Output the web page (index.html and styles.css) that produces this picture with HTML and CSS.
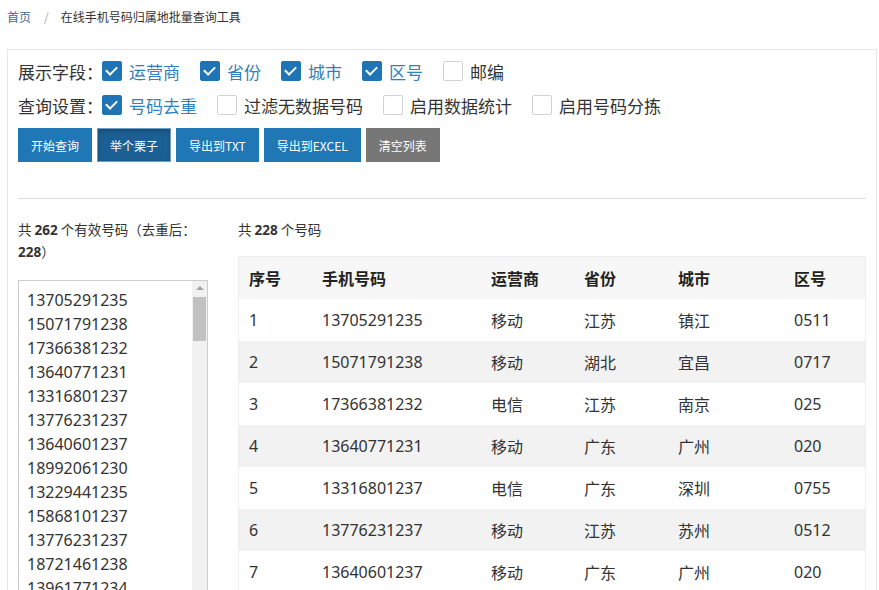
FILE: index.html
```html
<!DOCTYPE html>
<html lang="zh-CN">
<head>
<meta charset="utf-8">
<title>在线手机号码归属地批量查询工具</title>
<link rel="stylesheet" href="styles.css">
</head>
<body>
<div class="crumb"><a class="crumb-link">首页</a><span class="crumb-sep">/</span><span class="crumb-cur">在线手机号码归属地批量查询工具</span></div>
<div class="panel">
  <div class="form-row">
    <span class="form-label">展示字段：</span>
    <label class="opt on"><span class="cb"></span>运营商</label>
    <label class="opt on"><span class="cb"></span>省份</label>
    <label class="opt on"><span class="cb"></span>城市</label>
    <label class="opt on"><span class="cb"></span>区号</label>
    <label class="opt"><span class="cb"></span>邮编</label>
  </div>
  <div class="form-row">
    <span class="form-label">查询设置：</span>
    <label class="opt on"><span class="cb"></span>号码去重</label>
    <label class="opt"><span class="cb"></span>过滤无数据号码</label>
    <label class="opt"><span class="cb"></span>启用数据统计</label>
    <label class="opt"><span class="cb"></span>启用号码分拣</label>
  </div>
  <div class="btns">
    <button class="btn">开始查询</button>
    <button class="btn active">举个栗子</button>
    <button class="btn">导出到TXT</button>
    <button class="btn">导出到EXCEL</button>
    <button class="btn gray">清空列表</button>
  </div>
  <div class="divider"></div>
  <div class="cols">
    <div class="left">
      <p class="info">共 <b>262</b> 个有效号码（去重后：<b>228</b>）</p>
      <div class="listbox">
        <div class="list">
          <div>13705291235</div>
          <div>15071791238</div>
          <div>17366381232</div>
          <div>13640771231</div>
          <div>13316801237</div>
          <div>13776231237</div>
          <div>13640601237</div>
          <div>18992061230</div>
          <div>13229441235</div>
          <div>15868101237</div>
          <div>13776231237</div>
          <div>18721461238</div>
          <div>13961771234</div>
        </div>
        <div class="sbar"><div class="sarrow"></div><div class="sthumb"></div></div>
      </div>
    </div>
    <div class="right">
      <p class="info">共 <b>228</b> 个号码</p>
      <table class="tbl">
        <thead>
          <tr><th class="c1">序号</th><th class="c2">手机号码</th><th class="c3">运营商</th><th class="c4">省份</th><th class="c5">城市</th><th>区号</th></tr>
        </thead>
        <tbody>
          <tr><td>1</td><td>13705291235</td><td>移动</td><td>江苏</td><td>镇江</td><td>0511</td></tr>
          <tr><td>2</td><td>15071791238</td><td>移动</td><td>湖北</td><td>宜昌</td><td>0717</td></tr>
          <tr><td>3</td><td>17366381232</td><td>电信</td><td>江苏</td><td>南京</td><td>025</td></tr>
          <tr><td>4</td><td>13640771231</td><td>移动</td><td>广东</td><td>广州</td><td>020</td></tr>
          <tr><td>5</td><td>13316801237</td><td>电信</td><td>广东</td><td>深圳</td><td>0755</td></tr>
          <tr><td>6</td><td>13776231237</td><td>移动</td><td>江苏</td><td>苏州</td><td>0512</td></tr>
          <tr><td>7</td><td>13640601237</td><td>移动</td><td>广东</td><td>广州</td><td>020</td></tr>
        </tbody>
      </table>
    </div>
  </div>
</div>
</body>
</html>
```
FILE: styles.css
```css
html, body {
  margin: 0;
  padding: 0;
  overflow: hidden;
  background: #fff;
}
body {
  font-family: "Noto Sans", "Noto Sans CJK SC", sans-serif;
  color: #333;
  width: 879px;
  height: 590px;
}
.crumb {
  padding: 8px 7px;
  font-size: 12px;
  line-height: 18px;
  display: flex;
  font-family: "Noto Sans CJK SC", sans-serif;
}
.crumb-link { color: #3c6a90; }
.crumb-sep { color: #aaa; padding: 0 12px 0 13px; }
.crumb-cur { color: #333; }

.panel {
  margin: 15px 2px 0 7px;
  border: 1px solid #e6e6e6;
  border-bottom: none;
  padding: 6px 10px 0 10px;
  height: 600px;
}
.form-row {
  display: flex;
  align-items: center;
  height: 30px;
  margin-bottom: 4px;
  font-family: "Noto Sans CJK SC", sans-serif;
  font-size: 17px;
  white-space: nowrap;
}
.form-label {
  flex: none;
  width: 84px;
  color: #333;
  white-space: nowrap;
}
.opt {
  display: flex;
  align-items: center;
  gap: 7px;
  margin-right: 20px;
  color: #333;
}
.opt.on { color: #2f80bd; }
.cb {
  width: 18px;
  height: 18px;
  border: 1px solid #d2d2d2;
  border-radius: 2px;
  background: #fff;
  position: relative;
}
.opt.on .cb {
  background: #1f74b5;
  border-color: #1f74b5;
}
.opt.on .cb::after {
  content: "";
  position: absolute;
  left: 5px;
  top: 2px;
  width: 5px;
  height: 9px;
  border: solid #fff;
  border-width: 0 2.5px 2.5px 0;
  transform: rotate(45deg);
}
.btns {
  display: flex;
  gap: 5px;
  margin-top: 8px;
}
.btn {
  height: 34px;
  padding: 0 12px;
  border: 1px solid #1f77b6;
  background: #1f77b6;
  color: #fff;
  font-family: "Noto Sans CJK SC", sans-serif;
  font-size: 12px;
  border-radius: 0;
  letter-spacing: 0;
}
.btn.active {
  background: #1c5f93;
  border-color: #6d9cc4;
  box-shadow: inset 0 2px 4px rgba(0,0,0,0.2);
}
.btn.gray {
  background: #777;
  border-color: #777;
}
.divider {
  height: 1px;
  background: #ddd;
  margin-top: 36px;
}
.cols {
  display: flex;
  gap: 30px;
  margin-top: 20px;
}
.left { width: 190px; flex: none; }
.right { flex: 1; }
.info {
  margin: 0;
  font-family: "Noto Sans CJK SC", sans-serif;
  font-size: 13.5px;
  line-height: 21px;
  color: #333;
}
.info b {
  font-family: "Noto Sans", sans-serif;
  font-weight: 700;
}
.listbox {
  margin-top: 17px;
  height: 320px;
  border: 1px solid #ccc;
  border-bottom: none;
  display: flex;
}
.list {
  flex: 1;
  padding: 7px 8px;
  font-size: 16px;
  line-height: 24px;
  color: #333;
  overflow: hidden;
}
.sbar {
  width: 15px;
  flex: none;
  background: #f1f1f1;
  display: flex;
  flex-direction: column;
  align-items: center;
}
.sarrow {
  margin-top: 5px;
  width: 0;
  height: 0;
  border-left: 4px solid transparent;
  border-right: 4px solid transparent;
  border-bottom: 4px solid #a3a3a3;
}
.sthumb {
  margin-top: 7px;
  width: 13px;
  height: 44px;
  background: #c1c1c1;
}
.right .info { margin-bottom: 15px; }
.tbl {
  width: 628px;
  border-collapse: collapse;
  border: 1px solid #eee;
  font-size: 16px;
  color: #333;
}
.tbl th, .tbl td {
  height: 42px;
  padding: 0 0 0 10px;
  text-align: left;
}
.tbl th {
  background: #f7f7f7;
  font-family: "Noto Sans CJK SC", sans-serif;
  font-weight: 700;
  color: #222;
}
.tbl td {
  font-family: "Noto Sans", "Noto Sans CJK SC", sans-serif;
}
.tbl tbody tr:nth-child(even) td { background: #f2f2f2; }
.c1 { width: 63px; }
.c2 { width: 159px; }
.c3 { width: 83px; }
.c4 { width: 84px; }
.c5 { width: 106px; }
```
